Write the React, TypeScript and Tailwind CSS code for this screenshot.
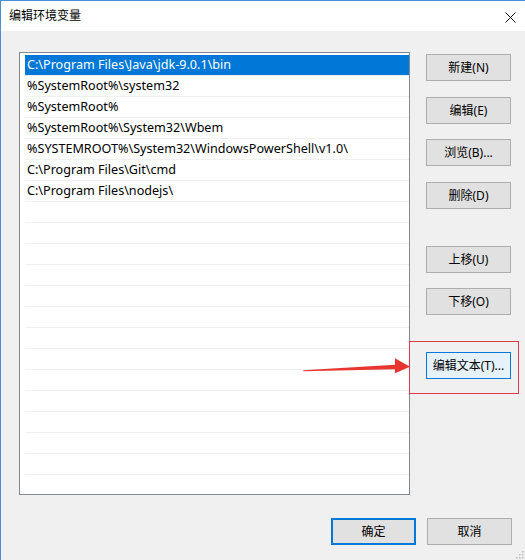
import React from 'react'

const rows = [
  'C:\\Program Files\\Java\\jdk-9.0.1\\bin',
  '%SystemRoot%\\system32',
  '%SystemRoot%',
  '%SystemRoot%\\System32\\Wbem',
  '%SYSTEMROOT%\\System32\\WindowsPowerShell\\v1.0\\',
  'C:\\Program Files\\Git\\cmd',
  'C:\\Program Files\\nodejs\\',
]

const font = { fontFamily: '"Noto Sans", "Noto Sans CJK SC", sans-serif' }

function Btn({ label, className = '' }: { label: string; className?: string }) {
  return (
    <div
      className={`w-[85px] h-[27px] flex items-center justify-center text-[12px] text-black border border-[#adadad] bg-[#e1e1e1] ${className}`}
    >
      {label}
    </div>
  )
}

export default function App() {
  const blank = Array.from({ length: 14 })
  return (
    <div
      className="relative w-[525px] h-[560px] bg-[#f0f0f0] border-l border-t border-[#4a8fd9] overflow-hidden flex flex-col"
      style={font}
    >
      {/* title bar */}
      <div className="h-[30px] bg-white flex items-center justify-between pl-[8px] pr-[9px] shrink-0">
        <span className="text-[12px] text-black">编辑环境变量</span>
        <svg width="11" height="11" viewBox="0 0 11 11" className="mt-[2px]">
          <path d="M0.5 0.5 L10.5 10.5 M10.5 0.5 L0.5 10.5" stroke="#111" strokeWidth="1" />
        </svg>
      </div>

      {/* body */}
      <div className="flex pl-[18px] pt-[21px]">
        <div className="w-[391px] h-[443px] bg-white border border-[#828790] pt-[2px] pl-[5px] overflow-hidden">
          {rows.map((r, i) => (
            <div
              key={i}
              className={`h-[21px] flex items-center pl-[2px] pt-[1px] text-[12.6px] whitespace-pre border-b border-[#f0f0f0] ${
                i === 0 ? 'bg-[#0078d7] text-white border-[#0078d7]' : 'text-black'
              }`}
            >
              {r}
            </div>
          ))}
          {blank.map((_, i) => (
            <div key={i} className="h-[21px] border-b border-[#f0f0f0]" />
          ))}
        </div>

        <div className="ml-[16px] mt-[2px] flex flex-col">
          <Btn label="新建(N)" />
          <Btn label="编辑(E)" className="mt-[16px]" />
          <Btn label="浏览(B)..." className="mt-[15px]" />
          <Btn label="删除(D)" className="mt-[16px]" />
          <Btn label="上移(U)" className="mt-[37px]" />
          <Btn label="下移(O)" className="mt-[15px]" />
          <Btn label="编辑文本(T)..." className="mt-[37px] !bg-[#e5f1fb] !border-[#0078d7]" />
        </div>
      </div>

      {/* dialog buttons */}
      <div className="flex justify-end gap-[11px] pr-[13px] mt-[23px]">
        <Btn label="确定" className="!border-2 !border-[#0078d7]" />
        <Btn label="取消" />
      </div>

      {/* annotation: red box */}
      <div className="absolute left-[408px] top-[340px] w-[110px] h-[53px] border border-[#dc3a44]" />

      {/* annotation: arrow */}
      <svg className="absolute left-[299px] top-[351px]" width="115" height="26" viewBox="0 0 115 26">
        <polygon
          points="3.3,18.3 95,12.8 95,6.3 110,14.7 95,21.3 95,17.3 3.3,19.2"
          fill="#e8352f"
        />
      </svg>

      {/* resize grip */}
      <svg className="absolute right-[1px] bottom-[1px]" width="8" height="8" viewBox="0 0 8 8">
        <rect x="6" y="0" width="1.5" height="1.5" fill="#b8b8b8" />
        <rect x="3" y="3" width="1.5" height="1.5" fill="#b8b8b8" />
        <rect x="6" y="3" width="1.5" height="1.5" fill="#b8b8b8" />
        <rect x="0" y="6" width="1.5" height="1.5" fill="#b8b8b8" />
        <rect x="3" y="6" width="1.5" height="1.5" fill="#b8b8b8" />
        <rect x="6" y="6" width="1.5" height="1.5" fill="#b8b8b8" />
      </svg>
    </div>
  )
}
